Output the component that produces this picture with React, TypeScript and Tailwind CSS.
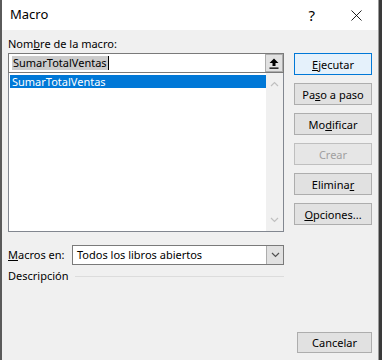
import { X } from "lucide-react";

const font = "font-['Segoe_UI','Noto_Sans',sans-serif]";

function Btn({ children, primary, disabled }: { children: React.ReactNode; primary?: boolean; disabled?: boolean }) {
  let cls = "border-[#adadad] bg-[#e1e1e1] text-black";
  if (primary) cls = "border-[#0078d7] bg-[#e5f1fb] text-black";
  if (disabled) cls = "border-[#bfbfbf] bg-[#e6e6e6] text-[#a0a0a0]";
  return (
    <div className={`h-[22px] w-[78px] border flex items-center justify-center text-[11px] leading-none ${cls}`}>
      {children}
    </div>
  );
}

function Chevron({ up }: { up?: boolean }) {
  return (
    <svg width="9" height="6" viewBox="0 0 9 6">
      <path d={up ? "M1 5 L4.5 1.5 L8 5" : "M1 1 L4.5 4.5 L8 1"} fill="none" stroke="currentColor" strokeWidth="1.2" />
    </svg>
  );
}

export default function App() {
  return (
    <div className={`w-[382px] h-[360px] flex bg-[#3c3c3c] ${font}`}>
      {/* -- strip of the window behind -- */}
      <div className="w-[2px] bg-[#5a5a5a]" />

      <div className="flex-1 flex flex-col bg-[#f0f0f0]">
        {/* -- title bar -- */}
        <div className="h-[30px] bg-white flex items-center pl-[8px] pr-[12px]">
          <span className="text-[13px] text-black">Macro</span>
          <span className="ml-auto mr-[32px] text-[15px] text-black">?</span>
          <X size={19} strokeWidth={1.1} className="text-black" />
        </div>

        <div className="flex-1 flex flex-col pl-[6px] pr-[6px] pb-[7px]">
          <div className="pt-[7px] h-[23px] text-[11px] leading-[14px] text-black">
            Nom<span className="underline">b</span>re de la macro:
          </div>

          <div className="flex">
            <div className="w-[276px] flex flex-col">
              {/* -- name input -- */}
              <div className="h-[20px] border border-[#7a7a7a] bg-white flex items-center">
                <div className="flex-1 flex items-center pl-[3px]">
                  <span className="bg-[#cccccc] text-[11px] leading-[14px] text-black px-[1px]">SumarTotalVentas</span>
                  <span className="w-[1px] h-[14px] bg-black" />
                </div>
                <div className="w-[18px] h-[18px] border border-[#adadad] bg-[#e1e1e1] flex items-center justify-center">
                  <svg width="10" height="11" viewBox="0 0 10 11">
                    <path d="M5 0.5 L9.5 5 L6.5 5 L6.5 8 L3.5 8 L3.5 5 L0.5 5 Z" fill="black" />
                    <rect x="0.5" y="9.5" width="9" height="1.3" fill="black" />
                  </svg>
                </div>
              </div>

              {/* -- macro list -- */}
              <div className="h-[159px] border border-[#828790] border-t-0 bg-white flex">
                <div className="flex-1 pt-[2px] pl-[1px]">
                  <div className="h-[13px] bg-[#0078d7] text-white text-[11px] leading-[13px] pl-[2px]">SumarTotalVentas</div>
                </div>
                <div className="w-[17px] bg-[#f0f0f0] flex flex-col items-center justify-between py-[8px] text-[#c0c0c0]">
                  <Chevron up />
                  <Chevron />
                </div>
              </div>
            </div>

            {/* -- buttons -- */}
            <div className="ml-auto flex flex-col gap-[8px]">
              <Btn primary><span className="underline">E</span>jecutar</Btn>
              <Btn>Pa<span className="underline">s</span>o a paso</Btn>
              <Btn>Mo<span className="underline">d</span>ificar</Btn>
              <Btn disabled>Crear</Btn>
              <Btn>Elimina<span className="underline">r</span></Btn>
              <Btn><span className="underline">O</span>pciones...</Btn>
            </div>
          </div>

          <div className="w-[276px] mt-[13px] flex items-center">
            <span className="text-[11px] text-black"><span className="underline">M</span>acros en:</span>
            <div className="ml-auto w-[212px] h-[20px] border border-[#7a7a7a] bg-white flex items-center">
              <span className="flex-1 pl-[4px] text-[11px] text-black">Todos los libros abiertos</span>
              <div className="w-[17px] h-full bg-[#e1e1e1] border-l border-[#adadad] flex items-center justify-center text-[#505050]">
                <Chevron />
              </div>
            </div>
          </div>

          <div className="w-[276px] mt-[3px] flex items-center">
            <span className="text-[11px] text-black">Descripción</span>
            <div className="flex-1 ml-[6px] h-[1px] bg-[#dcdcdc]" />
          </div>

          <div className="mt-auto flex justify-end">
            <div className="w-[75px] h-[21px] border border-[#adadad] bg-[#e1e1e1] flex items-center justify-center text-[11px] leading-none text-black">
              Cancelar
            </div>
          </div>
        </div>
      </div>

      <div className="w-[4px] bg-[#3a3a3a] border-l border-[#9a9a9a]" />
    </div>
  );
}
